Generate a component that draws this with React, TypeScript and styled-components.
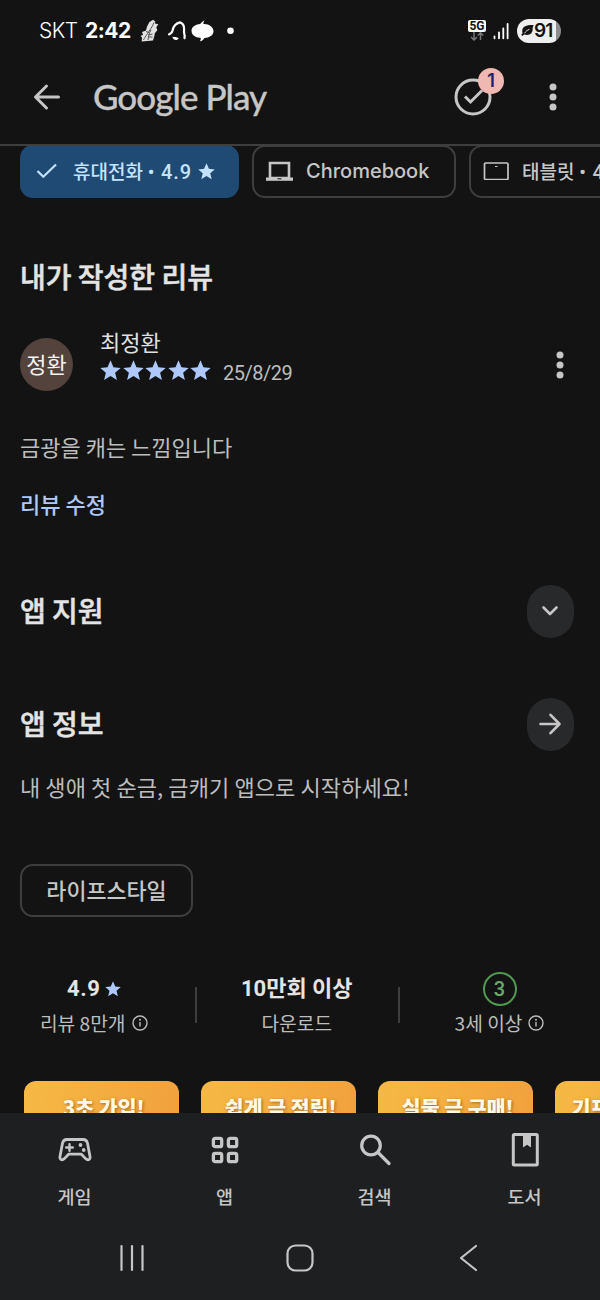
import React from "react";
import styled, { createGlobalStyle } from "styled-components";

const kr = `"Noto Sans CJK KR", sans-serif`;

const Global = createGlobalStyle`
  body { margin: 0; background: #131313; }
  * { box-sizing: border-box; }
  svg { display: block; flex: none; }
`;

const Screen = styled.div`
  width: 600px;
  height: 1300px;
  display: flex;
  flex-direction: column;
  overflow: hidden;
  background: #131313;
  color: #c6c6c6;
  font-family: Roboto, ${kr};
  white-space: nowrap;
`;

const StatusBar = styled.div`
  height: 61px;
  flex: none;
  display: flex;
  align-items: center;
  padding: 0 39px;
  color: #fff;
  font-family: Inter, sans-serif;
  font-size: 21px;
`;
const Carrier = styled.span`
  width: 46px;
  font-weight: 300;
  letter-spacing: -0.6px;
`;
const Clock = styled.span`
  width: 55px;
  font-weight: 700;
  letter-spacing: -0.5px;
`;
const StatusEnd = styled.div`
  display: flex;
  align-items: center;
  margin-left: auto;
`;
const Network = styled.div`
  display: flex;
  flex-direction: column;
  align-items: center;
  width: 18px;
  margin-right: 7px;
`;
const NetworkTag = styled.span`
  width: 18px;
  height: 12px;
  border-radius: 2px;
  background: #fff;
  color: #131313;
  font: 700 12px/12.5px Roboto, sans-serif;
  text-align: center;
`;
const Battery = styled.div`
  display: flex;
  align-items: center;
  width: 44px;
  height: 24px;
  margin-left: 8px;
  padding-left: 4px;
  border-radius: 12px;
  background: linear-gradient(90deg, #eee 0 39.5px, #8c8c8c 39.5px);
  color: #131313;
  font: 600 19px/24px Inter, sans-serif;
  letter-spacing: -0.8px;
`;

const AppBar = styled.header`
  height: 85px;
  flex: none;
  display: flex;
  align-items: center;
  padding: 0 42px 12px 33px;
  border-bottom: 2px solid #3e3e3e;
`;
const Brand = styled.h1`
  margin: -2px auto 0 32px;
  color: #c6c6c6;
  font: 500 35px/44px Lato, sans-serif;
  letter-spacing: -0.95px;
  -webkit-text-stroke: 0.3px #c6c6c6;
`;
const BadgeHost = styled.div`
  position: relative;
  margin-right: 56px;
`;
const Badge = styled.span`
  position: absolute;
  left: 24px;
  top: -9.5px;
  width: 26px;
  height: 26px;
  border-radius: 50%;
  background: #efb8b3;
  color: #1d2266;
  font: 600 18px/26px Inter, sans-serif;
  text-align: center;
`;

const Content = styled.main`
  flex: 1;
  min-height: 0;
  overflow: hidden;
`;

const Chips = styled.div`
  display: flex;
  gap: 13px;
  margin: -1px 0 0 20px;
`;
const Chip = styled.div<{ $w: number; $active?: boolean }>`
  flex: none;
  display: flex;
  align-items: center;
  width: ${(p) => p.$w}px;
  height: 53px;
  padding-bottom: 1px;
  padding-left: ${(p) => (p.$active ? 16 : 12)}px;
  border: ${(p) => (p.$active ? "0" : "2px solid #3e3e3e")};
  border-radius: 13px;
  background: ${(p) => (p.$active ? "#1f4a74" : "transparent")};
  color: ${(p) => (p.$active ? "#c4e2fc" : "#c6c6c6")};
`;
const ChipLabel = styled.span<{ $gap: number; $latin?: boolean }>`
  margin: -1px 0 0 ${(p) => p.$gap}px;
  font-family: ${(p) => (p.$latin ? "Inter, sans-serif" : `Roboto, ${kr}`)};
  font-size: ${(p) => (p.$latin ? 20 : 19)}px;
  font-weight: 500;
`;
const Score = styled.span`
  margin: 0 6px 0 2px;
  font-size: 20px;
  letter-spacing: 0.9px;
`;

const Title = styled.h2`
  margin: -3px 0 0;
  color: #e4e4e4;
  font: 500 28px/40px ${kr};
  -webkit-text-stroke: 0.5px #e4e4e4;
`;
const ReviewTitle = styled(Title)`
  margin: 58px 20px 0;
`;
const ReviewHead = styled.div`
  display: flex;
  align-items: center;
  height: 53px;
  margin: 42px 35px 0 20px;
`;
const Avatar = styled.div`
  width: 53px;
  height: 53px;
  margin-right: 27px;
  border-radius: 50%;
  background: #54423c;
  color: #f2f2f2;
  font: 400 22px/51px ${kr};
  text-align: center;
`;
const Reviewer = styled.div`
  flex: 1;
  margin-top: -21px;
  color: #e0e0e0;
  font: 400 22px/32px ${kr};
`;
const Rating = styled.div`
  display: flex;
  align-items: center;
  gap: 1.6px;
  height: 27px;
  color: #aec8fa;
`;
const ReviewDate = styled.span`
  margin: 7px 0 0 10px;
  color: #bdbdbd;
  font: 400 20px/27px Roboto, sans-serif;
  letter-spacing: -0.5px;
`;
const Body = styled.p<{ $top: number; $spacing?: number }>`
  margin: ${(p) => p.$top}px 20px 0;
  color: #bdbdbd;
  font: 400 22px/32px ${kr};
  letter-spacing: ${(p) => p.$spacing ?? 0}px;
`;
const EditLink = styled.a`
  display: block;
  margin: 25px 20px 0;
  color: #aec8fa;
  font: 500 22px/32px ${kr};
`;
const SectionRow = styled.div<{ $top: number }>`
  display: flex;
  align-items: center;
  justify-content: space-between;
  height: 53px;
  margin: ${(p) => p.$top}px 26.5px 0 20px;
`;
const RoundButton = styled.button`
  display: flex;
  align-items: center;
  justify-content: center;
  width: 47px;
  height: 53px;
  padding: 0 0 1px;
  border: 0;
  border-radius: 24px;
  background: #28292b;
  color: #c6c6c6;
`;
const Tag = styled.div`
  width: 173px;
  height: 53px;
  margin: 62px 0 0 20px;
  border: 2px solid #3e3e3e;
  border-radius: 13px;
  color: #c6c6c6;
  font: 500 21.8px/48px ${kr};
  text-align: center;
`;

const Stats = styled.div`
  display: grid;
  grid-template-columns: 194.5px 203px 202.5px;
  height: 64px;
  margin-top: 54px;
`;
const Stat = styled.div<{ $line?: boolean; $shift?: number }>`
  display: flex;
  flex-direction: column;
  align-items: center;
  padding-left: ${(p) => (p.$line ? 1.5 : 0)}px;
  padding-right: ${(p) => p.$shift ?? 0}px;
  background: ${(p) =>
    p.$line ? "linear-gradient(#3e3e3e, #3e3e3e) 0 16px / 2px 36px no-repeat" : "none"};
`;
const StatValue = styled.div`
  display: flex;
  align-items: center;
  gap: 4px;
  height: 36px;
  color: #e4e4e4;
  font: 700 22px/36px Roboto, ${kr};
  svg { color: #aec8fa; }
`;
const ValueNumber = styled.span`
  letter-spacing: 0.7px;
`;
const StatLabel = styled.div`
  display: flex;
  align-items: center;
  gap: 6px;
  color: #bdbdbd;
  font: 400 19.2px/32px ${kr};
`;
const AgeMark = styled.span`
  width: 34px;
  height: 34px;
  border: 2.5px solid #4f9a50;
  border-radius: 50%;
  color: #6bab68;
  font: 500 20px/30px Roboto, sans-serif;
  text-align: center;
`;

const Shots = styled.div`
  display: flex;
  gap: 21.5px;
  margin: 46px 0 0 23.5px;
`;
const Shot = styled.div`
  flex: none;
  width: 155.5px;
  height: 270px;
  padding: 10px 0 0 5px;
  border-radius: 12px;
  background: linear-gradient(100deg, #f6b944, #f09b3b);
  color: #fff8e6;
  font: 900 20.5px/32px ${kr};
  text-align: center;
  text-shadow: 1px 1px 3px rgba(110, 60, 0, 0.6);
`;

const BottomNav = styled.nav`
  flex: none;
  display: grid;
  grid-template-columns: repeat(4, 150px);
  height: 105px;
  background: #1e1f21;
`;
const NavItem = styled.div`
  display: flex;
  flex-direction: column;
  align-items: center;
  padding: 17px 1px 0 0;
  color: #c6c6c6;
  font: 500 18.5px/28px ${kr};
  svg { margin-bottom: 12px; }
`;
const SystemNav = styled.div`
  flex: none;
  display: grid;
  grid-template-columns: 48px 1fr 48px;
  align-items: center;
  justify-items: center;
  height: 82px;
  padding: 0 108px 2px;
  background: #1e1f21;
`;

const stroke = {
  fill: "none",
  stroke: "currentColor",
  strokeLinecap: "round" as const,
  strokeLinejoin: "round" as const,
};

const Star = ({ size = 21 }: { size?: number }) => (
  <svg width={size} height={size} viewBox="0 0 20 20" fill="currentColor">
    <path d="M10 .3l2.800 6.600 6.900.6-5.300 4.600 1.700 6.900-6.100-3.800L3.900 19l1.700-6.900L.3 7.500l6.900-.6z" />
  </svg>
);
const More = () => (
  <svg width="10" height="30" viewBox="0 0 10 30" fill="#c6c6c6">
    <circle cx="5" cy="5" r="3.500" />
    <circle cx="5" cy="15" r="3.500" />
    <circle cx="5" cy="25" r="3.500" />
  </svg>
);
const Info = () => (
  <svg width="16" height="16" viewBox="0 0 16 16" {...stroke} strokeWidth="1.400">
    <circle cx="8" cy="8" r="7" />
    <path d="M8 7.500v3.600" />
    <path d="M8 4.600v.1" strokeWidth="1.900" />
  </svg>
);

const StatusIcons = () => (
  <svg width="96" height="24" viewBox="140.500 19 96 24">
    <path d="M150 22l3.500-2.200 2.200 1.700-.2 2 3.300.8-2 3 1 3-2.500 3-.5 3-1.300 4.200-11.300 1 .3-4-1.500-1.500 2.500-1.200-1-2.800 4-1.500 1-4z" fill="#e2e2e2" />
    <path d="M154.500 22.500c-2 5-4.500 8-6.500 11s-3 4.500-4 6.500M151.500 30c-2 3-2.500 6-3 10M146.500 31.500l3 1M153 34l-4 1M153 37h-4" fill="none" stroke="#444" strokeWidth=".9" />
    <path d="M169.500 34.300c1.800-.3 3-1.600 3.600-4 1-4.500 3.400-7 7.400-7.900 2.800 1 4.200 3.500 4.100 6.800-.2 2.200-.3 3.300.2 4.600.5 1.500.5 2.800.2 4.400" fill="none" stroke="#fff" strokeWidth="2.200" strokeLinecap="round" />
    <path d="M172.800 36.700c2 .2 4.200.4 6.500 1.200-1 2.800-5.300 3-6.500-1.200z" fill="#fff" />
    <path d="M205 20.400c-.9 1.200-1.300 2.400-1 3.600 5.400-.4 10 3 10 7.200 0 4.200-4.300 6.500-9 6.700-1.200 1.700-2.500 2.900-4.500 3.400.7-1.300.9-2.400.5-3.500-5 .2-9-2.900-9-7 0-4.300 4.600-6.500 8.700-6.800 1.200-1.700 2.400-3 4.300-3.600z" fill="#fff" />
    <circle cx="231" cy="30.700" r="3.300" fill="#fff" />
  </svg>
);

const GamesIcon = () => (
  <svg width="40" height="40" viewBox="0 0 40 40" {...stroke} strokeWidth="2.800">
    <path d="M11.700 9.500h16.600c2.400 0 3.700 1.500 4.200 3.700l2.500 13.200c.4 2-.5 3.400-2 3.400-1 0-1.700-.5-2.400-1.200l-4.200-4.400H13.600l-4.200 4.400c-.7.700-1.400 1.200-2.400 1.200-1.500 0-2.400-1.400-2-3.400l2.500-13.200c.5-2.200 1.800-3.700 4.200-3.700z" />
    <path d="M14.500 14.200v6.600M11.200 17.500h6.600" strokeWidth="2.400" />
    <g fill="currentColor" stroke="none">
      <circle cx="25.500" cy="15" r="1.900" />
      <circle cx="28.700" cy="20" r="1.900" />
    </g>
  </svg>
);
const AppsIcon = () => (
  <svg width="40" height="40" viewBox="0 0 40 40" {...stroke} strokeWidth="3.300">
    {[8.400, 23.400].map((x) =>
      [8.400, 23.400].map((y) => <rect key={`${x}-${y}`} x={x} y={y} width="8.300" height="8.300" rx="1.800" />)
    )}
  </svg>
);
const SearchIcon = () => (
  <svg width="40" height="40" viewBox="0 0 40 40" {...stroke} strokeWidth="3.200">
    <circle cx="16" cy="15.500" r="9.300" />
    <path d="M23 22.500L34 33.500" />
  </svg>
);
const BooksIcon = () => (
  <svg width="40" height="40" viewBox="0 0 40 40" {...stroke} strokeWidth="3">
    <rect x="8.300" y="4.500" width="24" height="30.500" rx="1" />
    <path d="M18 4.500h8v13l-4-2.700-4 2.700z" fill="currentColor" stroke="none" />
  </svg>
);

const navItems = [
  { label: "게임", icon: <GamesIcon /> },
  { label: "앱", icon: <AppsIcon /> },
  { label: "검색", icon: <SearchIcon /> },
  { label: "도서", icon: <BooksIcon /> },
];
const shots = ["3초 가입!", "쉽게 금 적립!", "실물 금 구매!", "기프티콘 구매!"];

export default function App() {
  return (
    <Screen>
      <Global />
      <StatusBar>
        <Carrier>SKT</Carrier>
        <Clock>2:42</Clock>
        <StatusIcons />
        <StatusEnd>
          <Network>
            <NetworkTag>5G</NetworkTag>
            <svg width="14" height="9" viewBox="0 0 14 9" fill="none" stroke="#777" strokeWidth="1.500">
              <path d="M4 0v7.500M1 5l3 3 3-3M10.500 8V1M7.800 3.500l2.700-2.700 2.700 2.700" />
            </svg>
          </Network>
          <svg width="16" height="18" viewBox="0 0 16 18" fill="none" stroke="#fff" strokeWidth="1.800" strokeLinecap="round">
            <path d="M1.500 14.500v1.800M6 10.500v5.800M10.300 6.500v9.800M14.600 1.800v14.500" />
          </svg>
          <Battery>
            <svg width="13" height="13" viewBox="0 0 13 13">
              <path d="M12.700 1C6 .8 1.500 2 1.200 6.800c0 1 .1 1.700.4 2.400L.2 10.800l1.300 1.300 1.600-1.500c5.400 1.500 8.500-1.400 8.500-4.800 0-2 .2-3.200 1.100-4.800z" fill="#131313" />
              <path d="M3.500 9.300C5 7 6.500 6 8.500 5.300" fill="none" stroke="#eee" strokeWidth=".9" />
            </svg>
            91
          </Battery>
        </StatusEnd>
      </StatusBar>
      <AppBar>
        <svg width="28" height="28" viewBox="0 0 28 28" {...stroke} strokeWidth="3">
          <path d="M25.500 14H3M13.500 3L2.500 14l11 11" />
        </svg>
        <Brand>Google Play</Brand>
        <BadgeHost>
          <svg width="38" height="38" viewBox="0 0 38 38" {...stroke} strokeWidth="3">
            <circle cx="19" cy="19" r="17" />
            <path d="M11 18.500l5.500 5.500L28 12.500" strokeLinecap="butt" strokeLinejoin="miter" />
          </svg>
          <Badge>1</Badge>
        </BadgeHost>
        <More />
      </AppBar>
      <Content>
        <Chips>
          <Chip $w={219} $active>
            <svg width="22" height="18" viewBox="0 0 22 18" {...stroke} strokeWidth="2.200" strokeLinecap="butt">
              <path d="M1.500 9l5.800 5.800L20 2.500" />
            </svg>
            <ChipLabel $gap={15}>휴대전화 • <Score>4.9</Score></ChipLabel>
            <Star size={17} />
          </Chip>
          <Chip $w={204}>
            <svg width="27" height="21" viewBox="0 0 27 21">
              <path d="M4 2h19v15h-19z" fill="none" stroke="currentColor" strokeWidth="2.600" />
              <path d="M0 16.500h27v3.300H0z" fill="currentColor" />
              <path d="M11.500 17.300h4v1h-4z" fill="#131313" />
            </svg>
            <ChipLabel $gap={13} $latin>Chromebook</ChipLabel>
          </Chip>
          <Chip $w={220}>
            <svg width="26" height="18" viewBox="0 0 26 18">
              <rect x="1.500" y="1" width="23.500" height="16.500" rx="1" fill="none" stroke="currentColor" strokeWidth="1.700" />
              <path d="M12 4h2.500v1h-2.500z" fill="currentColor" />
            </svg>
            <ChipLabel $gap={13}>태블릿 • <Score>4.9</Score></ChipLabel>
          </Chip>
        </Chips>

        <ReviewTitle>내가 작성한 리뷰</ReviewTitle>
        <ReviewHead>
          <Avatar>정환</Avatar>
          <Reviewer>
            최정환
            <Rating>
              {[0, 1, 2, 3, 4].map((i) => <Star key={i} />)}
              <ReviewDate>25/8/29</ReviewDate>
            </Rating>
          </Reviewer>
          <More />
        </ReviewHead>
        <Body $top={39}>금광을 캐는 느낌입니다</Body>
        <EditLink>리뷰 수정</EditLink>

        <SectionRow $top={66}>
          <Title>앱 지원</Title>
          <RoundButton aria-label="앱 지원">
            <svg width="18" height="12" viewBox="0 0 18 12" {...stroke} strokeWidth="2.600">
              <path d="M2.500 2.500L9 9l6.500-6.500" />
            </svg>
          </RoundButton>
        </SectionRow>
        <SectionRow $top={60}>
          <Title>앱 정보</Title>
          <RoundButton aria-label="앱 정보">
            <svg width="24" height="24" viewBox="0 0 24 24" {...stroke} strokeWidth="2.600">
              <path d="M2.500 12H21M12.500 2.800L21.500 12l-9 9.200" />
            </svg>
          </RoundButton>
        </SectionRow>
        <Body $top={19} $spacing={0.1}>내 생애 첫 순금, 금캐기 앱으로 시작하세요!</Body>
        <Tag>라이프스타일</Tag>

        <Stats>
          <Stat $shift={7}>
            <StatValue><ValueNumber>4.9</ValueNumber> <Star size={16} /></StatValue>
            <StatLabel>리뷰 8만개 <Info /></StatLabel>
          </Stat>
          <Stat $line>
            <StatValue>10만회 이상</StatValue>
            <StatLabel>다운로드</StatLabel>
          </Stat>
          <Stat $line>
            <StatValue><AgeMark>3</AgeMark></StatValue>
            <StatLabel>3세 이상 <Info /></StatLabel>
          </Stat>
        </Stats>

        <Shots>
          {shots.map((s) => <Shot key={s}>{s}</Shot>)}
        </Shots>
      </Content>
      <BottomNav>
        {navItems.map((n) => (
          <NavItem key={n.label}>{n.icon}{n.label}</NavItem>
        ))}
      </BottomNav>
      <SystemNav>
        <svg width="26" height="28" viewBox="0 0 26 28" {...stroke} strokeWidth="2.200">
          <path d="M2.500 2v24M13 2v24M23.500 2v24" />
        </svg>
        <svg width="28" height="28" viewBox="0 0 28 28" {...stroke} strokeWidth="2.200">
          <rect x="1.500" y="1.500" width="25" height="25" rx="8" />
        </svg>
        <svg width="20" height="28" viewBox="0 0 20 28" {...stroke} strokeWidth="2.200">
          <path d="M18 2L3 14l15 12" />
        </svg>
      </SystemNav>
    </Screen>
  );
}
